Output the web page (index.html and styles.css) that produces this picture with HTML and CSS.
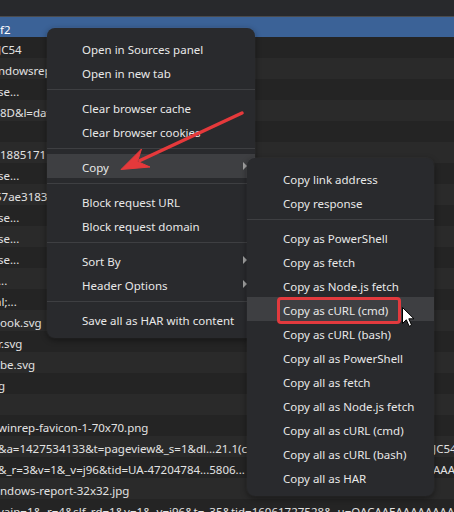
FILE: index.html
```html
<!DOCTYPE html>
<html>
<head>
<meta charset="utf-8">
<link rel="stylesheet" href="styles.css">
</head>
<body>
<div class="page">
  <div class="header"></div>
  <div class="rows">
    <div class="row sel"><span class="c1">f2</span></div>
    <div class="row"><span class="c1 cut">JC54</span></div>
    <div class="row alt"><span class="c1 cut">ndowsreport</span></div>
    <div class="row"><span class="c1 cut">se...</span></div>
    <div class="row alt"><span class="c1">8D&amp;l=data</span></div>
    <div class="row"><span class="c1"></span></div>
    <div class="row alt"><span class="c1">1885171</span></div>
    <div class="row"><span class="c1 cut">se...</span></div>
    <div class="row alt"><span class="c1 cut2">57ae3183</span></div>
    <div class="row"><span class="c1 cut">se...</span></div>
    <div class="row alt"><span class="c1 cut">se...</span></div>
    <div class="row"><span class="c1 cut">se...</span></div>
    <div class="row alt"><span class="c1 cut2">l...</span></div>
    <div class="row"><span class="c1 cut2">al;...</span></div>
    <div class="row alt"><span class="c1">ook.svg</span></div>
    <div class="row"><span class="c1 cut">r.svg</span></div>
    <div class="row alt"><span class="c1">be.svg</span></div>
    <div class="row"><span class="c1 cut">g</span></div>
    <div class="row alt"><span class="c1"></span></div>
    <div class="row"><span class="c1 cut">winrep-favicon-1-70x70.png</span></div>
    <div class="row alt"><span class="c1 cut2">l&amp;a=1427534133&amp;t=pageview&amp;_s=1&amp;dl...21.1(cmd)...</span><span class="c2">JC54</span></div>
    <div class="row"><span class="c1 cut2">l&amp;_r=3&amp;v=1&amp;_v=j96&amp;tid=UA-47204784...5806...</span><span class="c2">AAA</span></div>
    <div class="row alt"><span class="c1">ndows-report-32x32.jpg</span></div>
    <div class="row"><span class="c1 wide cut">vaip=1&amp;_r=4&amp;slf_rd=1&amp;v=1&amp;_v=j96&amp;t=_35&amp;tid=16061727528&amp;_u=QACAAEAAAAAAAAAAA</span></div>
  </div>

  <div class="menu main-menu">
    <div class="item">Open in Sources panel</div>
    <div class="item">Open in new tab</div>
    <div class="sep"></div>
    <div class="item">Clear browser cache</div>
    <div class="item">Clear browser cookies</div>
    <div class="sep"></div>
    <div class="item active">Copy<span class="tri"></span></div>
    <div class="sep"></div>
    <div class="item">Block request URL</div>
    <div class="item">Block request domain</div>
    <div class="sep"></div>
    <div class="item">Sort By<span class="tri"></span></div>
    <div class="item">Header Options<span class="tri"></span></div>
    <div class="sep"></div>
    <div class="item">Save all as HAR with content</div>
  </div>

  <div class="menu sub-menu">
    <div class="item">Copy link address</div>
    <div class="item">Copy response</div>
    <div class="sep"></div>
    <div class="item">Copy as PowerShell</div>
    <div class="item">Copy as fetch</div>
    <div class="item">Copy as Node.js fetch</div>
    <div class="item active">Copy as cURL (cmd)</div>
    <div class="item">Copy as cURL (bash)</div>
    <div class="item">Copy all as PowerShell</div>
    <div class="item">Copy all as fetch</div>
    <div class="item">Copy all as Node.js fetch</div>
    <div class="item">Copy all as cURL (cmd)</div>
    <div class="item">Copy all as cURL (bash)</div>
    <div class="item">Copy all as HAR</div>
  </div>

  <div class="hl-box"></div>

  <svg class="overlay" width="454" height="512" viewBox="0 0 454 512" xmlns="http://www.w3.org/2000/svg">
    <line x1="242" y1="113" x2="140" y2="160.5" stroke="#e5393b" stroke-width="3.5" stroke-linecap="round"/>
    <polygon points="121,169.5 141.5,149 137.5,161.5 150,167" fill="#e5393b" stroke="#e5393b" stroke-width="1" stroke-linejoin="round"/>
    <path d="M402.5 307.5 L402.5 323.5 L406.3 319.8 L409.2 326.3 L411.6 325.2 L408.8 318.8 L414 318.8 Z" fill="#ffffff" stroke="#000000" stroke-width="1" stroke-linejoin="round"/>
  </svg>
</div>
</body>
</html>
```

FILE: styles.css
```css
html, body {
  margin: 0;
  padding: 0;
  background: #242424;
  overflow: hidden;
}

.page {
  position: relative;
  width: 454px;
  height: 512px;
  overflow: hidden;
  font-family: "Noto Sans", "Open Sans", "DejaVu Sans", sans-serif;
}

.header {
  height: 16px;
  background: #28292c;
  border-bottom: 1px solid #4a4b4e;
}

.rows {
  display: flex;
  flex-direction: column;
}

.row {
  height: 21px;
  line-height: 25px;
  background: #242424;
  color: #e2e2e2;
  font-size: 11.5px;
  display: grid;
  grid-template-columns: 433px 1fr;
  white-space: nowrap;
  overflow: hidden;
}

.row.alt {
  background: #2a2a2a;
}

.row.sel {
  height: 20px;
  line-height: 25px;
  background: #3b6297;
  color: #ffffff;
}

.c1, .c2 {
  overflow: hidden;
  white-space: nowrap;
}

.c1.wide {
  grid-column: 1 / -1;
}

.cut {
  text-indent: -2px;
}

.cut2 {
  text-indent: -5px;
}

.menu {
  position: absolute;
  background: #292a2d;
  border-radius: 8px;
  box-shadow: 0 2px 6px rgba(0, 0, 0, 0.45), 0 0 0 1px rgba(255, 255, 255, 0.03);
  padding: 8px 0 7px 0;
  font-size: 11.5px;
  color: #e8e8e8;
}

.main-menu {
  left: 47px;
  top: 28px;
  width: 208px;
}

.sub-menu {
  left: 247px;
  top: 158px;
  width: 187px;
}

.item {
  box-sizing: border-box;
  height: 24px;
  line-height: 20px;
  padding: 4px 8px 0 35px;
  display: flex;
  align-items: center;
  justify-content: space-between;
  white-space: nowrap;
}

.sub-menu .item {
  padding-left: 36px;
}

.item.active {
  background: #3e3f42;
}

.sep {
  height: 1px;
  background: #3e3f42;
  margin: 5px 0;
}

.tri {
  width: 0;
  height: 0;
  margin-top: -4px;
  border-left: 4px solid #a2a2a2;
  border-top: 4px solid transparent;
  border-bottom: 4px solid transparent;
}

.hl-box {
  position: absolute;
  left: 277px;
  top: 297px;
  width: 118px;
  height: 21px;
  border: 3px solid #e23a3e;
  border-radius: 4px;
}

.overlay {
  position: absolute;
  left: 0;
  top: 0;
  pointer-events: none;
}
```
